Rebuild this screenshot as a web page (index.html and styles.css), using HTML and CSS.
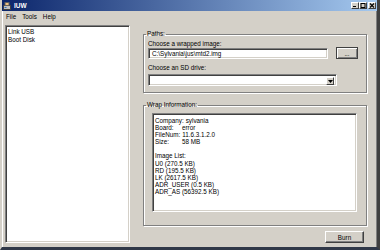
FILE: index.html
```html
<!DOCTYPE html>
<html>
<head>
<meta charset="utf-8">
<link rel="stylesheet" href="styles.css">
</head>
<body>
<div class="window">
  <div class="titlebar">
    <svg class="app-icon" width="8" height="8" viewBox="0 0 8 8">
      <rect x="0.5" y="3.5" width="7" height="4" fill="#c0c0c0" stroke="#404040" stroke-width="1"/>
      <rect x="2" y="0.5" width="4" height="3" fill="#f0c080" stroke="#606060" stroke-width="1"/>
      <rect x="1.5" y="5" width="2" height="1" fill="#3070c0"/>
    </svg>
    <span class="title">IUW</span>
    <div class="caption-buttons">
      <span class="cbtn"><svg width="6" height="5" viewBox="0 0 6 5"><rect x="1" y="3" width="3" height="1" fill="#000"/></svg></span>
      <span class="cbtn"><svg width="6" height="5" viewBox="0 0 6 5"><rect x="1" y="0.5" width="4" height="4" fill="none" stroke="#000" stroke-width="1"/><rect x="1" y="0" width="4" height="1" fill="#000"/></svg></span>
      <span class="cbtn close"><svg width="6" height="5" viewBox="0 0 6 5"><path d="M1 0.5 L5 4.5 M5 0.5 L1 4.5" stroke="#000" stroke-width="1.1"/></svg></span>
    </div>
  </div>
  <div class="menubar">
    <span class="menu-item">File</span>
    <span class="menu-item">Tools</span>
    <span class="menu-item">Help</span>
  </div>
  <div class="client">
    <div class="listbox">
      <div class="list-item">Link USB</div>
      <div class="list-item">Boot Disk</div>
    </div>
    <div class="right">
      <fieldset class="group paths">
        <legend>Paths:</legend>
        <div class="group-body paths-body">
          <div class="label">Choose a wrapped image:</div>
          <div class="row">
            <div class="textbox">C:\Sylvania\jus\mtd2.img</div>
            <button class="btn browse">...</button>
          </div>
          <div class="label second">Choose an SD drive:</div>
          <div class="combo">
            <span class="combo-arrow"><svg width="5" height="3" viewBox="0 0 5 3"><path d="M0 0 H5 L2.5 3 Z" fill="#000"/></svg></span>
          </div>
        </div>
      </fieldset>
      <fieldset class="group info">
        <legend>Wrap Information:</legend>
        <div class="group-body info-body">
          <div class="memo">
            <div class="line"><span class="key">Company:</span>sylvania</div>
            <div class="line"><span class="key">Board:</span>error</div>
            <div class="line"><span class="key">FileNum:</span>11.6.3.1.2.0</div>
            <div class="line"><span class="key">Size:</span>58 MB</div>
            <div class="line">&nbsp;</div>
            <div class="line">Image List:</div>
            <div class="line">U0 (270.5 KB)</div>
            <div class="line">RD (195.5 KB)</div>
            <div class="line">LK (2617.5 KB)</div>
            <div class="line">ADR_USER (0.5 KB)</div>
            <div class="line">ADR_AS (56392.5 KB)</div>
          </div>
        </div>
      </fieldset>
      <div class="actions">
        <button class="btn burn">Burn</button>
      </div>
    </div>
  </div>
</div>
</body>
</html>
```

FILE: styles.css
```css
* { box-sizing: border-box; }
html, body { margin: 0; padding: 0; background: #d4d0c8; }
body {
  font-family: "Liberation Sans", Arial, sans-serif;
  font-size: 6.3px;
  color: #000;
}
.window {
  width: 380px;
  height: 250px;
  background: #d4d0c8;
  border-left: 2px solid #d4d0c8;
  border-right: 3px solid #404040;
  border-bottom: 3px solid #303848;
  box-shadow: inset 1px 0 #ffffff, inset -1px 0 #808080;
  display: flex;
  flex-direction: column;
  overflow: hidden;
}
.titlebar {
  height: 11px;
  margin-left: -2px;
  margin-right: -3px;
  padding-left: 3px;
  padding-right: 4px;
  display: flex;
  align-items: center;
  background: linear-gradient(to right, #0a246a, #a6caf0);
  flex: none;
}
.app-icon { display: block; margin-right: 3px; }
.title {
  color: #fff;
  font-weight: bold;
  font-size: 6.5px;
  line-height: 8px;
}
.caption-buttons {
  margin-left: auto;
  display: flex;
}
.cbtn {
  width: 8px;
  height: 7px;
  background: #d4d0c8;
  border-top: 1px solid #fff;
  border-left: 1px solid #fff;
  border-right: 1px solid #404040;
  border-bottom: 1px solid #404040;
  display: flex;
  align-items: center;
  justify-content: center;
}
.cbtn.close { margin-left: 1px; }
.menubar {
  height: 11px;
  display: flex;
  align-items: center;
  padding-left: 1px;
  flex: none;
}
.menu-item {
  padding: 0 3px;
  line-height: 8px;
}
.client {
  flex: 1;
  display: flex;
  padding: 3px 10px 4px 3px;
  gap: 13px;
  min-height: 0;
}
.listbox {
  width: 125px;
  background: #fff;
  border-top: 1px solid #808080;
  border-left: 1px solid #808080;
  border-right: 1px solid #fff;
  border-bottom: 1px solid #fff;
  box-shadow: inset 1px 1px #404040, inset -1px -1px #d4d0c8;
  padding: 2px 2px;
}
.list-item { line-height: 7.5px; }
.right {
  flex: 1;
  display: flex;
  flex-direction: column;
  padding-top: 5px;
}
.group {
  margin: 0;
  padding: 0;
  border: 1px solid #808080;
  box-shadow: inset 1px 1px #fff, 1px 1px #fff;
  min-width: 0;
}
.group legend {
  margin-left: 2px;
  padding: 0 1px;
  line-height: 8px;
  font-size: 6.3px;
}
.paths {
  height: 63px;
  flex: none;
}
.paths-body { padding: 2px 8px 0 4px; }
.label { line-height: 8px; }
.label.second { margin-top: 5px; }
.row {
  display: flex;
  align-items: center;
  gap: 8px;
}
.textbox {
  width: 180px;
  height: 11px;
  background: #fff;
  border-top: 1px solid #808080;
  border-left: 1px solid #808080;
  border-right: 1px solid #fff;
  border-bottom: 1px solid #fff;
  box-shadow: inset 1px 1px #404040, inset -1px -1px #d4d0c8;
  padding-left: 3px;
  line-height: 9px;
  white-space: nowrap;
}
.btn {
  font-family: inherit;
  font-size: 6.3px;
  color: #000;
  background: #d4d0c8;
  border-top: 1px solid #fff;
  border-left: 1px solid #fff;
  border-right: 1px solid #404040;
  border-bottom: 1px solid #404040;
  box-shadow: inset -1px -1px #808080;
  padding: 0;
  margin: 0;
  line-height: 9px;
}
.browse {
  width: 22px;
  height: 12px;
  margin-top: -1px;
  border: 1px solid #404040;
  box-shadow: inset 1px 1px #fff, inset -1px -1px #808080;
}
.combo {
  margin-top: 2px;
  width: 189px;
  height: 12px;
  background: #fff;
  border-top: 1px solid #808080;
  border-left: 1px solid #808080;
  border-right: 1px solid #fff;
  border-bottom: 1px solid #fff;
  box-shadow: inset 1px 1px #404040, inset -1px -1px #d4d0c8;
  display: flex;
  justify-content: flex-end;
  padding: 2px;
}
.combo-arrow {
  width: 8px;
  height: 8px;
  background: #d4d0c8;
  border-top: 1px solid #fff;
  border-left: 1px solid #fff;
  border-right: 1px solid #404040;
  border-bottom: 1px solid #404040;
  display: flex;
  align-items: center;
  justify-content: center;
}
.combo-arrow svg { display: block; }
.info {
  margin-top: 8px;
  flex: 1;
  display: flex;
  flex-direction: column;
}
.info-body {
  flex: 1;
  padding: 4px 9px 13px 8px;
  display: flex;
  flex-direction: column;
}
.memo {
  flex: 1;
  background: #fff;
  border-top: 1px solid #808080;
  border-left: 1px solid #808080;
  border-right: 1px solid #fff;
  border-bottom: 1px solid #fff;
  box-shadow: inset 1px 1px #404040, inset -1px -1px #d4d0c8;
  padding: 3px 2px 0 2px;
}
.line {
  line-height: 7.1px;
  white-space: nowrap;
}
.key {
  display: inline-block;
  min-width: 27px;
  padding-right: 2px;
}
.actions {
  margin-top: 5px;
  display: flex;
  justify-content: flex-end;
  padding-right: 3px;
}
.burn {
  width: 39px;
  height: 12px;
}
```
